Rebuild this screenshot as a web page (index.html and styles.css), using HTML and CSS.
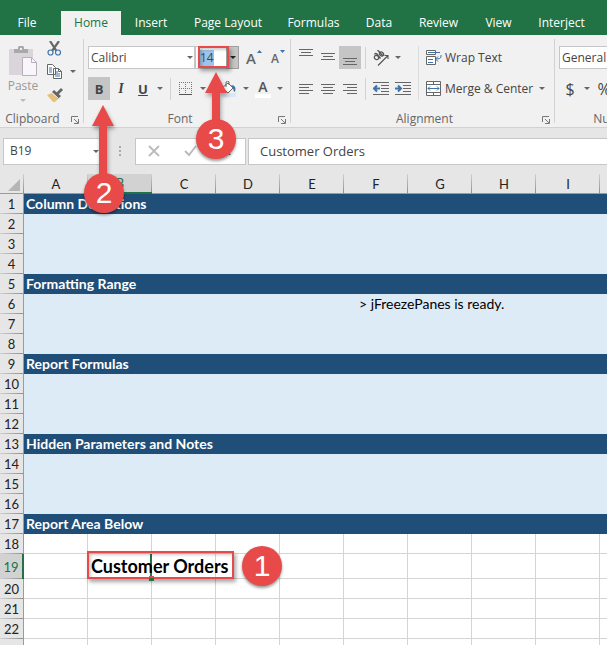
FILE: index.html
```
<!DOCTYPE html>
<html lang="en">
<head>
<meta charset="utf-8">
<title>Customer Orders</title>
<link rel="stylesheet" href="styles.css">
</head>
<body>
<nav class="tabs">
  <a class="tab file" href="#">File</a>
  <a class="tab active" href="#">Home</a>
  <a class="tab" href="#">Insert</a>
  <a class="tab" href="#">Page Layout</a>
  <a class="tab" href="#">Formulas</a>
  <a class="tab" href="#">Data</a>
  <a class="tab" href="#">Review</a>
  <a class="tab" href="#">View</a>
  <a class="tab" href="#">Interject</a>
</nav>

<div class="ribbon">
  <section class="group clipboard">
    <div class="clip-body">
      <button class="paste" type="button">
        <svg width="30" height="32" viewBox="0 0 30 32"><path d="M1 3h24v26H1z" fill="#d9d5da"/><path d="M6 7V3h4V1l1-1h4l1 1v2h4v4z" fill="#aaa8aa"/><path d="M12 2h2v2h-2z" fill="#f1f1f1"/><path d="M14.500 11.500h9l5 5v13h-14z" fill="#f8f6fa" stroke="#b9aebb"/><path d="M23.500 11.500v5h5" fill="none" stroke="#b9aebb"/></svg>
        <span>Paste</span>
        <i class="caret pale"></i>
      </button>
      <div class="clip-side">
        <button type="button" aria-label="Cut"><svg width="15" height="15" viewBox="0 0 15 15"><path d="M3 0l6.500 10M12 0L5 10" stroke="#666" stroke-width="2.200" fill="none"/><circle cx="3.500" cy="11.500" r="2.500" fill="#f1f1f1" stroke="#3f74ab" stroke-width="1.200"/><circle cx="11" cy="11.500" r="2.500" fill="#f1f1f1" stroke="#3f74ab" stroke-width="1.200"/></svg></button>
        <button type="button" aria-label="Copy"><svg width="15" height="15" viewBox="0 0 15 15"><path d="M.5.5h5l3 3v7h-8zM6.500 4.500h5l3 3v7h-8z" fill="#fff" stroke="#666"/><path d="M2 4h3M2 6h3M2 8h3M8 8h3M8 10h5M8 12h5" stroke="#3f74ab"/><path d="M11.500 4.500v3h3" fill="none" stroke="#666"/></svg></button>
        <i class="caret"></i>
        <button type="button" aria-label="Format Painter"><svg width="16" height="14" viewBox="0 0 16 14"><path d="M0 7l5-2 6 6-3 3H6z" fill="#e9bf7c"/><path d="M5 4l2-2 7 6-3 3z" fill="#666"/><path d="M9 5l5-5 2 2-5 5z" fill="#666"/><path d="M5.500 5l6 5.500" stroke="#f1f1f1"/></svg></button>
      </div>
    </div>
    <div class="caption"><span>Clipboard</span><button type="button" class="launch" aria-label="Clipboard settings"><svg width="8" height="8" viewBox="0 0 8 8"><path d="M.5 6V.5H7M3 3l4 4M7.500 3v4.500H3" fill="none" stroke="#777"/></svg></button></div>
  </section>

  <section class="group font">
    <div class="line">
      <span class="pick name"><select aria-label="Font"><option>Calibri</option></select><i class="caret"></i></span>
      <span class="size"><input aria-label="Font size" value="14" size="2"><button type="button" aria-label="Font size list"><i class="caret dark"></i></button></span>
      <button class="tool grow" type="button" aria-label="Increase font size"><span class="big">A</span><svg width="5" height="3" viewBox="0 0 5 3"><path d="M0 3L2.500 0 5 3z" fill="#3f74ab"/></svg></button>
      <button class="tool grow" type="button" aria-label="Decrease font size"><span>A</span><svg width="5" height="3" viewBox="0 0 5 3"><path d="M0 0h5L2.500 3z" fill="#3f74ab"/></svg></button>
    </div>
    <div class="line">
      <button class="tool on bold" type="button">B</button>
      <button class="tool italic" type="button">I</button>
      <button class="tool under" type="button">U</button>
      <i class="caret"></i>
      <span class="rule"></span>
      <button class="tool" type="button" aria-label="Borders"><svg width="14" height="14" viewBox="0 0 14 14"><path d="M.5 0v13M6.500 0v13M12.500 0v13M0 .5h13M0 6.500h13" stroke="#777" stroke-dasharray="1 1"/><path d="M0 12.500h13" stroke="#555"/></svg></button>
      <i class="caret"></i>
      <button class="tool fill" type="button" aria-label="Fill color"><svg width="16" height="16" viewBox="0 0 16 16"><path d="M2 12h13v4H2z" fill="#d9e8f6"/><path d="M1 7l6-5 5 5-5 5z" fill="#fff" stroke="#666"/><path d="M5 6V1q2-2 3 0v3" fill="none" stroke="#666"/><path d="M10 4q6 0 4 7-2-1-2-4z" fill="#3f74ab"/></svg></button>
      <i class="caret"></i>
      <button class="tool color" type="button" aria-label="Font color"><span>A</span></button>
      <i class="caret"></i>
    </div>
    <div class="caption"><span>Font</span><button type="button" class="launch" aria-label="Font settings"><svg width="8" height="8" viewBox="0 0 8 8"><path d="M.5 6V.5H7M3 3l4 4M7.500 3v4.500H3" fill="none" stroke="#777"/></svg></button></div>
  </section>

  <section class="group align">
    <div class="align-body">
      <div class="align-left">
        <div class="line">
          <button class="tool" type="button" aria-label="Top align"><svg width="14" height="18" viewBox="0 0 14 18"><path d="M0 .5h14M2 3.500h10M0 6.500h14" stroke="#666"/></svg></button>
          <button class="tool" type="button" aria-label="Middle align"><svg width="14" height="18" viewBox="0 0 14 18"><path d="M0 4.500h14M2 7.500h10M0 10.500h14" stroke="#666"/></svg></button>
          <button class="tool on" type="button" aria-label="Bottom align"><svg width="14" height="18" viewBox="0 0 14 18"><path d="M0 9.500h14M2 12.500h10M0 15.500h14" stroke="#666"/></svg></button>
          <span class="rule"></span>
          <button class="tool" type="button" aria-label="Orientation"><svg width="16" height="16" viewBox="0 0 16 16"><g fill="none" stroke="#555" stroke-width="1.300"><ellipse cx="3.500" cy="7.500" rx="2" ry="2.300" transform="rotate(-45 3.500 7.500)"/><path d="M1.500 4.500q1-2 2.500-.5l3.500 4.500"/><path d="M4.500 0l5.500 6"/><ellipse cx="8.500" cy="4" rx="1.800" ry="2.300" transform="rotate(-45 8.500 4)"/><path d="M5 15.500L15 5.500M11.500 5.500H15V9" stroke-width="1.100"/></g></svg></button>
          <i class="caret"></i>
        </div>
        <div class="line">
          <button class="tool" type="button" aria-label="Align left"><svg width="14" height="12" viewBox="0 0 14 12"><path d="M0 1.500h14M0 4.500h10M0 7.500h14M0 10.500h10" stroke="#666"/></svg></button>
          <button class="tool" type="button" aria-label="Center"><svg width="14" height="12" viewBox="0 0 14 12"><path d="M0 1.500h14M2 4.500h10M0 7.500h14M2 10.500h10" stroke="#666"/></svg></button>
          <button class="tool" type="button" aria-label="Align right"><svg width="14" height="12" viewBox="0 0 14 12"><path d="M0 1.500h14M4 4.500h10M0 7.500h14M4 10.500h10" stroke="#666"/></svg></button>
          <span class="rule"></span>
          <button class="tool" type="button" aria-label="Decrease indent"><svg width="16" height="13" viewBox="0 0 16 13"><path d="M0 .5h16M8 3.500h8M8 6.500h8M8 9.500h8M0 12.500h16" stroke="#666"/><path d="M1 6.500h6M4 3.500l-3 3 3 3" stroke="#3f74ab" stroke-width="2" fill="none"/></svg></button>
          <button class="tool" type="button" aria-label="Increase indent"><svg width="16" height="13" viewBox="0 0 16 13"><path d="M0 .5h16M8 3.500h8M8 6.500h8M8 9.500h8M0 12.500h16" stroke="#666"/><path d="M0 6.500h6M3 3.500l3 3-3 3" stroke="#3f74ab" stroke-width="2" fill="none"/></svg></button>
        </div>
      </div>
      <div class="align-right">
        <button class="wide" type="button"><svg width="16" height="16" viewBox="0 0 16 16"><path d="M.5.500h9v4h-9zM.5 6.500h9v8h-9z" fill="#fff" stroke="#666"/><path d="M2 2.500h12M2 9.500h5M2 12.500h5M15 5v2q0 2-5 2M12 6.500L9.500 9l2.500 2.500" stroke="#3f74ab" fill="none"/></svg><span>Wrap Text</span></button>
        <button class="wide" type="button"><svg width="16" height="16" viewBox="0 0 16 16"><path d="M.5.500h14v14H.5zM.5 3.500h14M.5 11.500h14M7.500.500v3M7.500 11.500v3" fill="#fff" stroke="#666"/><path d="M2 7.500h11M4 5.500l-2 2 2 2M11 5.500l2 2-2 2" stroke="#3f74ab" fill="none"/></svg><span>Merge &amp; Center</span><i class="caret"></i></button>
      </div>
    </div>
    <div class="caption"><span>Alignment</span><button type="button" class="launch" aria-label="Alignment settings"><svg width="8" height="8" viewBox="0 0 8 8"><path d="M.5 6V.5H7M3 3l4 4M7.500 3v4.500H3" fill="none" stroke="#777"/></svg></button></div>
  </section>

  <section class="group number">
    <div class="line"><span class="pick format"><select aria-label="Number format"><option>General</option></select></span></div>
    <div class="line"><button class="tool sign" type="button">$</button><i class="caret"></i><button class="tool sign" type="button">%</button></div>
    <div class="caption"><span>Number</span></div>
  </section>
</div>

<div class="formula-bar">
  <div class="box cell-name"><input aria-label="Name box" value="B19"><i class="caret"></i></div>
  <svg class="dots" width="2" height="10" viewBox="0 0 2 10"><path d="M0 0h2v2H0zM0 4h2v2H0zM0 8h2v2H0z" fill="#aaa"/></svg>
  <div class="box entry">
    <button type="button" aria-label="Cancel"><svg width="12" height="12" viewBox="0 0 12 12"><path d="M1 1l10 10M11 1L1 11" stroke="#bbb" stroke-width="1.800"/></svg></button>
    <button type="button" aria-label="Enter"><svg width="13" height="12" viewBox="0 0 13 12"><path d="M1 6l4 4 7-9" fill="none" stroke="#bbb" stroke-width="2"/></svg></button>
    <button type="button" class="fx">fx</button>
  </div>
  <div class="box formula"><input aria-label="Formula" value="Customer Orders"></div>
</div>

<div class="sheet">
<table>
<colgroup><col class="num"><col span="10"></colgroup>
<thead><tr><th class="corner"><svg width="12" height="12" viewBox="0 0 12 12"><path d="M12 0v12H0z" fill="#b5b5b5"/></svg></th><th>A</th><th class="picked">B</th><th>C</th><th>D</th><th>E</th><th>F</th><th>G</th><th>H</th><th>I</th><th></th></tr></thead>
<tbody>
<tr class="head"><th>1</th><td colspan="10">Column Definitions</td></tr>
<tr class="pale-row"><th>2</th><td colspan="10"></td></tr>
<tr class="pale-row"><th>3</th><td colspan="10"></td></tr>
<tr class="pale-row"><th>4</th><td colspan="10"></td></tr>
<tr class="head"><th>5</th><td colspan="10">Formatting Range</td></tr>
<tr class="pale-row"><th>6</th><td colspan="5"></td><td class="note" colspan="5">&gt; jFreezePanes is ready.</td></tr>
<tr class="pale-row"><th>7</th><td colspan="10"></td></tr>
<tr class="pale-row"><th>8</th><td colspan="10"></td></tr>
<tr class="head"><th>9</th><td colspan="10">Report Formulas</td></tr>
<tr class="pale-row"><th>10</th><td colspan="10"></td></tr>
<tr class="pale-row"><th>11</th><td colspan="10"></td></tr>
<tr class="pale-row"><th>12</th><td colspan="10"></td></tr>
<tr class="head"><th>13</th><td colspan="10">Hidden Parameters and Notes</td></tr>
<tr class="pale-row"><th>14</th><td colspan="10"></td></tr>
<tr class="pale-row"><th>15</th><td colspan="10"></td></tr>
<tr class="pale-row"><th>16</th><td colspan="10"></td></tr>
<tr class="head"><th>17</th><td colspan="10">Report Area Below</td></tr>
<tr><th>18</th><td></td><td></td><td></td><td></td><td></td><td></td><td></td><td></td><td></td><td></td></tr>
<tr class="current"><th>19</th><td></td><td class="title"><span>Customer Orders</span></td><td></td><td></td><td></td><td></td><td></td><td></td><td></td><td></td></tr>
<tr><th>20</th><td></td><td></td><td></td><td></td><td></td><td></td><td></td><td></td><td></td><td></td></tr>
<tr><th>21</th><td></td><td></td><td></td><td></td><td></td><td></td><td></td><td></td><td></td><td></td></tr>
<tr><th>22</th><td></td><td></td><td></td><td></td><td></td><td></td><td></td><td></td><td></td><td></td></tr>
<tr><th></th><td></td><td></td><td></td><td></td><td></td><td></td><td></td><td></td><td></td><td></td></tr>
</tbody>
</table>
</div>

<div class="frame frame-size"></div>
<div class="frame frame-cell"></div>
<div class="handle"></div>
<svg class="arrow arrow-bold" width="24" height="80" viewBox="0 0 24 80"><path d="M12 0l11 21h-7v59H8V21H1z" fill="#e84a49"/></svg>
<svg class="arrow arrow-size" width="24" height="60" viewBox="0 0 24 60"><path d="M12 0l11 21h-7v39H8V21H1z" fill="#e84a49"/></svg>
<div class="step step-1">1</div>
<div class="step step-2">2</div>
<div class="step step-3">3</div>
</body>
</html>
```
FILE: styles.css
```
* { box-sizing: border-box; }
body {
  margin: 0;
  position: relative;
  min-height: 100vh;
  overflow: hidden;
  background: #e6e6e6;
  color: #444;
  font: 12px/16px "Open Sans", "Noto Sans", sans-serif;
}
button, input, select {
  margin: 0;
  padding: 0;
  border: 0;
  background: none;
  color: inherit;
  font: inherit;
  appearance: none;
  outline: 0;
}
svg { display: block; flex: none; }

.tabs {
  display: grid;
  grid-template-columns: 61px 60px 60px 94px 77px 54px 65px 55px 71px;
  padding-top: 11px;
  background: #217346;
}
.tab {
  height: 24px;
  line-height: 24px;
  color: #fff;
  text-align: center;
  text-decoration: none;
  white-space: nowrap;
}
.file { padding-right: 7px; }
.active { background: #f1f1f1; color: #217346; }

.ribbon {
  display: flex;
  height: 93px;
  padding-top: 4px;
  background: #f1f1f1;
  border-bottom: 1px solid #d2d2d2;
  overflow: hidden;
}
.group {
  flex: none;
  display: flex;
  flex-direction: column;
  gap: 8px;
  height: 84px;
  padding-top: 7px;
  border-right: 1px solid #d2d2d2;
}
.clipboard { width: 84px; }
.font { width: 207px; padding-left: 4px; }
.align { width: 264px; padding-left: 4px; }
.number { width: 120px; padding-left: 4px; }

.caret {
  flex: none;
  border: 3px solid transparent;
  border-top-color: #666;
  border-bottom: 0;
  width: 6px;
  height: 3px;
  margin: 0 3px;
}
.caret.dark { border-top-color: #222; }
.caret.pale { border-top-color: #bbb; }

.caption {
  position: relative;
  display: flex;
  align-items: center;
  justify-content: center;
  height: 16px;
  margin-top: 3px;
  color: #666;
}
.clipboard .caption, .font .caption { padding-right: 18px; }
.launch { position: absolute; right: 4px; bottom: 3px; }
.line { display: flex; align-items: center; height: 23px; }
.tool {
  flex: none;
  display: flex;
  align-items: center;
  justify-content: center;
  width: 22px;
  height: 23px;
}
.on { background: #c5c5c5; }
.rule { width: 1px; height: 22px; margin: 0 4px; background: #d2d2d2; }

.clip-body { display: flex; height: 54px; }
.paste {
  display: flex;
  flex-direction: column;
  align-items: center;
  width: 46px;
  color: #999;
}
.paste .caret { margin-top: 5px; }
.clip-side {
  display: grid;
  grid-template-columns: 16px 12px;
  grid-template-rows: 15px 15px 15px;
  gap: 8px 4px;
  align-items: center;
  margin: -5px 0 0 1px;
}
.clip-side button:first-child { grid-column: 1 / 3; }

.pick, .size {
  display: flex;
  align-items: center;
  height: 23px;
  border: 1px solid #c6c6c6;
  background: #fff;
}
.pick select { flex: 1; padding-left: 2px; }
.name { width: 110px; }
.name .caret { margin-right: 1px; }
.format { width: 110px; }
.size { width: 44px; margin-right: 3px; }
.size input { width: 14px; margin: 0 12px 0 4px; background: #9bc6ea; }
.size button {
  display: flex;
  align-items: center;
  justify-content: center;
  width: 13px;
  height: 23px;
  background: #c5c5c5;
  border: 1px solid #a0a0a0;
}
.grow { align-items: flex-start; gap: 1px; width: 24px; font-size: 12px; font-weight: 600; color: #666; }
.grow span { padding-top: 5px; }
.grow svg { margin-top: 4px; }
.grow .big { padding-top: 4px; font-size: 15px; }
.bold { font-weight: 700; font-size: 13px; }
.italic { font: italic 700 14px "Liberation Serif", serif; }
.under { font-weight: 700; font-size: 13px; text-decoration: underline; }
.fill { margin-left: 9px; }
.color { font-weight: 600; font-size: 14px; color: #555; }
.color span { width: 16px; border-bottom: 4px solid #fff; line-height: 14px; }
.sign { font-size: 16px; }

.align-body { display: flex; height: 54px; }
.align-left {
  display: flex;
  flex-direction: column;
  gap: 8px;
  width: 124px;
  border-right: 1px solid #dcdcdc;
}
.align-right { display: flex; flex-direction: column; gap: 8px; padding-left: 7px; }
.wide { display: flex; align-items: center; gap: 3px; height: 23px; white-space: nowrap; }

.formula-bar {
  display: flex;
  align-items: center;
  height: 46px;
  padding: 0 0 0 3px;
}
.box {
  display: flex;
  align-items: center;
  height: 27px;
  background: #fff;
  border: 1px solid #c6c6c6;
}
.box input { width: 100%; min-width: 0; padding-left: 6px; }
.cell-name { width: 100px; }
.dots { margin: 0 14px 0 16px; }
.entry { width: 111px; padding-left: 12px; gap: 24px; margin-right: 2px; }
.fx { font: italic 14px "Liberation Serif", serif; }
.formula { flex: 1; font-size: 13px; border-right: 0; }
.formula input { padding-left: 11px; }

.sheet { overflow: hidden; font: 14px/18px Lato, sans-serif; color: #000; }
table { width: 664px; table-layout: fixed; border-collapse: separate; border-spacing: 0; background: #fff; }
.num { width: 24px; }
th, td { height: 20px; padding: 0; white-space: nowrap; }
th { font-size: 13px; font-weight: 400; color: #222; }
thead th {
  border-bottom: 1px solid #9b9b9b;
  background: linear-gradient(#d0d0d0, #8f8f8f) right / 1px 100% no-repeat #e6e6e6;
}
thead .picked { background-color: #d2d2d2; color: #217346; border-bottom: 2px solid #217346; }
.corner svg { margin: 2px 0 0 8px; }
tbody th {
  border-right: 1px solid #9b9b9b;
  background: linear-gradient(90deg, #d0d0d0, #8f8f8f) bottom / 100% 1px no-repeat #e6e6e6;
}
td { border-right: 1px solid #d4d4d4; border-bottom: 1px solid #d4d4d4; }
.head td { padding-left: 2px; border: 0; background: #1f4e78; color: #fff; font-weight: 700; }
.pale-row td { border: 0; background: #ddebf7; }
.pale-row .note { padding-left: 15px; }
.current th, .current td { height: 25px; }
.current th { background-color: #d2d2d2; color: #217346; border-right: 2px solid #217346; }
.title { border-right: 2px solid #217346; font-size: 18px; font-weight: 700; }
.title span { display: block; width: 0; padding-left: 3px; position: relative; }

.frame {
  position: absolute;
  border: 2px solid #e84a49;
  box-shadow: 2px 3px 4px rgba(0, 0, 0, .35), inset 2px 2px 3px rgba(0, 0, 0, .2);
}
.frame-size { left: 198px; top: 46px; width: 31px; height: 22px; }
.frame-cell { left: 87px; top: 551px; width: 147px; height: 28px; outline: 1px solid transparent; border-left-color: #e84a49; }
.handle { position: absolute; left: 149px; top: 576px; width: 5px; height: 5px; background: #217346; border-top: 2px solid #e84a49; }
.arrow { position: absolute; filter: drop-shadow(1px 3px 2px rgba(0, 0, 0, .35)); }
.arrow-bold { left: 91px; top: 105px; }
.arrow-size { left: 204px; top: 72px; }
.step {
  position: absolute;
  width: 40px;
  height: 40px;
  border-radius: 50%;
  background: #e84a49;
  box-shadow: 0 2px 3px rgba(0, 0, 0, .4);
  color: #fff;
  font: 30px/40px "Liberation Sans", sans-serif;
  text-align: center;
}
.step-1 { left: 242px; top: 546px; }
.step-2 { left: 84px; top: 173px; }
.step-3 { left: 196px; top: 119px; }
```
